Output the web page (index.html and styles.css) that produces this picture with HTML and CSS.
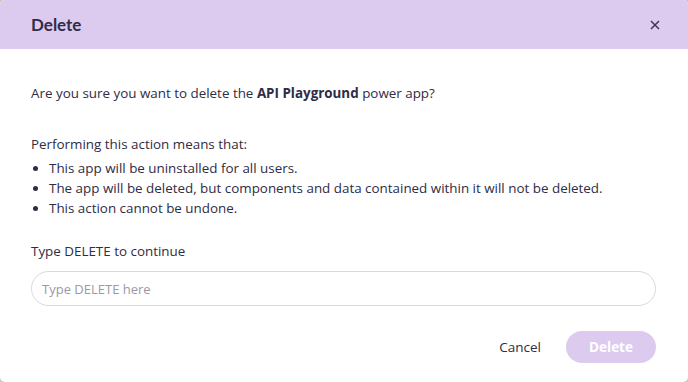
FILE: index.html
```html
<!DOCTYPE html>
<html>
<head>
<meta charset="utf-8">
<link rel="stylesheet" href="styles.css">
</head>
<body>
<div class="dialog">
  <div class="header">
    <h1 class="title">Delete</h1>
    <button class="close" aria-label="Close">
      <svg width="10" height="10" viewBox="0 0 10 10"><path d="M1 1L9 9M9 1L1 9" stroke="#3a3655" stroke-width="1.5" fill="none"/></svg>
    </button>
  </div>
  <div class="content">
    <p class="question">Are you sure you want to delete the <b>API Playground</b> power app?</p>
    <p class="means">Performing this action means that:</p>
    <ul class="list">
      <li>This app will be uninstalled for all users.</li>
      <li>The app will be deleted, but components and data contained within it will not be deleted.</li>
      <li>This action cannot be undone.</li>
    </ul>
    <label class="label" for="confirm">Type DELETE to continue</label>
    <input id="confirm" class="input" type="text" placeholder="Type DELETE here">
    <div class="actions">
      <button class="cancel">Cancel</button>
      <button class="delete">Delete</button>
    </div>
  </div>
</div>
</body>
</html>
```
FILE: styles.css
```css
* { box-sizing: border-box; }
html, body { margin: 0; padding: 0; }
body {
  width: 688px;
  height: 382px;
  background: #c9c9c9;
  font-family: "Open Sans", "Noto Sans", sans-serif;
  color: #2f2c45;
}
.dialog {
  width: 688px;
  height: 382px;
  background: #fff;
  border-radius: 5px;
  overflow: hidden;
  display: flex;
  flex-direction: column;
}
.header {
  height: 49px;
  background: #ddcbef;
  display: flex;
  align-items: center;
  justify-content: space-between;
  padding: 0 28px 0 31px;
}
.title {
  margin: 0;
  font-family: "Lato", sans-serif;
  font-weight: 700;
  font-size: 17px;
  color: #2f2c4a;
}
.close {
  border: 0;
  background: none;
  padding: 0;
  width: 10px;
  height: 10px;
  display: flex;
}
.content {
  padding: 0 32px 0 31px;
  display: flex;
  flex-direction: column;
  font-size: 13.4px;
}
.question {
  margin: 34px 0 0;
  line-height: 20px;
}
.question b { font-weight: 700; }
.means {
  margin: 31px 0 0;
  line-height: 20px;
}
.list {
  margin: 4px 0 0;
  padding-left: 18px;
  line-height: 20px;
}
.list li { padding-left: 0; }
.label {
  margin-top: 23px;
  line-height: 20px;
}
.input {
  margin-top: 10px;
  height: 35px;
  width: 625px;
  border: 1px solid #d9d9dd;
  border-radius: 18px;
  padding: 0 10px;
  font: inherit;
  font-size: 13px;
  color: #2f2c45;
  outline: none;
}
.input::placeholder { color: #9b99a8; }
.actions {
  margin-top: 25px;
  display: flex;
  justify-content: flex-end;
  align-items: center;
  gap: 25px;
}
.cancel {
  border: 0;
  background: none;
  font: inherit;
  font-size: 13.5px;
  color: #2f2c45;
  padding: 0;
}
.delete {
  width: 90px;
  height: 32px;
  border: 0;
  border-radius: 16px;
  background: #ddcbef;
  color: #fff;
  font-family: "Open Sans", sans-serif;
  font-weight: 700;
  font-size: 13.5px;
}
```
